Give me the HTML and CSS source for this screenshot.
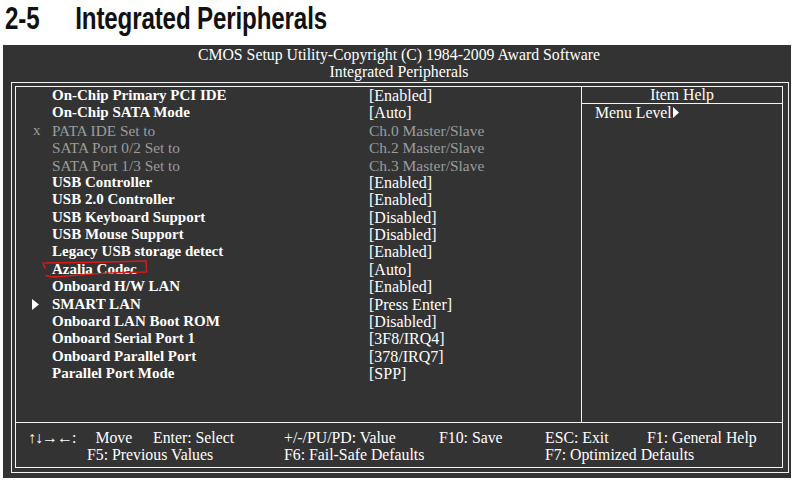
FILE: index.html
```html
<!DOCTYPE html>
<html>
<head>
<meta charset="utf-8">
<link rel="stylesheet" href="styles.css">
</head>
<body>
<div class="page">
  <h1 class="title"><span class="title-inner"><span class="num">2-5</span>Integrated Peripherals</span></h1>
  <div class="bios">
    <div class="hdr">CMOS Setup Utility-Copyright (C) 1984-2009 Award Software<br>Integrated Peripherals</div>
    <div class="frame">
      <div class="inner">
        <div class="main">
          <div class="list">
            <div class="row"><span class="mark"></span><span class="lbl">On-Chip Primary PCI IDE</span><span class="val">[Enabled]</span></div>
            <div class="row"><span class="mark"></span><span class="lbl">On-Chip SATA Mode</span><span class="val">[Auto]</span></div>
            <div class="row dim"><span class="mark">x</span><span class="lbl">PATA IDE Set to</span><span class="val">Ch.0 Master/Slave</span></div>
            <div class="row dim"><span class="mark"></span><span class="lbl">SATA Port 0/2 Set to</span><span class="val">Ch.2 Master/Slave</span></div>
            <div class="row dim"><span class="mark"></span><span class="lbl">SATA Port 1/3 Set to</span><span class="val">Ch.3 Master/Slave</span></div>
            <div class="row"><span class="mark"></span><span class="lbl">USB Controller</span><span class="val">[Enabled]</span></div>
            <div class="row"><span class="mark"></span><span class="lbl">USB 2.0 Controller</span><span class="val">[Enabled]</span></div>
            <div class="row"><span class="mark"></span><span class="lbl">USB Keyboard Support</span><span class="val">[Disabled]</span></div>
            <div class="row"><span class="mark"></span><span class="lbl">USB Mouse Support</span><span class="val">[Disabled]</span></div>
            <div class="row"><span class="mark"></span><span class="lbl">Legacy USB storage detect</span><span class="val">[Enabled]</span></div>
            <div class="row"><span class="mark"></span><span class="lbl">Azalia Codec</span><span class="val">[Auto]</span></div>
            <div class="row"><span class="mark"></span><span class="lbl">Onboard H/W LAN</span><span class="val">[Enabled]</span></div>
            <div class="row"><span class="mark"><svg class="tri" width="7" height="11" viewBox="0 0 7 11"><path d="M0 0 L7 5.5 L0 11 Z" fill="#fff"/></svg></span><span class="lbl">SMART LAN</span><span class="val">[Press Enter]</span></div>
            <div class="row"><span class="mark"></span><span class="lbl">Onboard LAN Boot ROM</span><span class="val">[Disabled]</span></div>
            <div class="row"><span class="mark"></span><span class="lbl">Onboard Serial Port 1</span><span class="val">[3F8/IRQ4]</span></div>
            <div class="row"><span class="mark"></span><span class="lbl">Onboard Parallel Port</span><span class="val">[378/IRQ7]</span></div>
            <div class="row"><span class="mark"></span><span class="lbl">Parallel Port Mode</span><span class="val">[SPP]</span></div>
          </div>
          <div class="help">
            <div class="help-title">Item Help</div>
            <div class="help-body">Menu Level<svg class="tri2" width="6" height="11" viewBox="0 0 6 11"><path d="M0 0 L6 5.5 L0 11 Z" fill="#fff"/></svg></div>
          </div>
        </div>
        <div class="footer">
          <span class="move"><span class="arrows">↑↓→←</span>:<span class="mv">Move</span></span>
          <span>Enter: Select</span>
          <span>+/-/PU/PD: Value</span>
          <span>F10: Save</span>
          <span>ESC: Exit</span>
          <span>F1: General Help</span>
          <span class="f5">F5: Previous Values</span>
          <span class="f6">F6: Fail-Safe Defaults</span>
          <span class="f7">F7: Optimized Defaults</span>
        </div>
      </div>
    </div>
  </div>
  <svg class="annot" width="793" height="480" viewBox="0 0 793 480">
    <path d="M43 263 L45 268 M45 263 Q95 262.5 146 261 L146.5 272 Q100 272.5 62 276.5 Q50 277.5 46 275.5" fill="none" stroke="#d61a1a" stroke-width="1.6" stroke-linecap="round"/>
  </svg>
</div>
</body>
</html>
```

FILE: styles.css
```css
html, body {
  margin: 0;
  padding: 0;
  background: #ffffff;
}

.page {
  position: relative;
  width: 793px;
  height: 480px;
  overflow: hidden;
}

.title {
  margin: 0;
  height: 45px;
  font-family: "Liberation Sans Narrow", "Liberation Sans", Arial, sans-serif;
  font-size: 32px;
  line-height: 36px;
  font-weight: 700;
  color: #111;
  white-space: nowrap;
}

.title-inner {
  display: inline-block;
  margin-left: 5px;
  transform: scaleX(0.755);
  transform-origin: 0 0;
  letter-spacing: -0.2px;
}

.num {
  display: inline-block;
  width: 93px;
}

.bios {
  margin-left: 3px;
  width: 788px;
  height: 433px;
  background: #333333;
  color: #ffffff;
  font-family: "Liberation Serif", "Times New Roman", serif;
  font-size: 15px;
  box-sizing: border-box;
  padding-top: 1px;
}

.hdr {
  text-align: center;
  line-height: 17px;
  padding-left: 4px;
  font-size: 15.8px;
}

.frame {
  margin-top: 2px;
  margin-left: 8px;
  width: 778px;
  box-sizing: border-box;
  border: 1px solid #f4f4f4;
  padding: 3px 5px 4px 3px;
}

.inner {
  border: 1px solid #f4f4f4;
  height: 382px;
  box-sizing: border-box;
  display: flex;
  flex-direction: column;
}

.main {
  display: flex;
  height: 336px;
  border-bottom: 1px solid #f4f4f4;
  box-sizing: border-box;
}

.list {
  width: 566px;
  box-sizing: border-box;
  border-right: 1px solid #f4f4f4;
  padding-top: 0;
}

.row {
  display: grid;
  grid-template-columns: 36px 317px 1fr;
  line-height: 17.375px;
  height: 17.375px;
  white-space: nowrap;
}

.mark {
  padding-left: 17px;
  display: flex;
  align-items: center;
}

.tri {
  margin-left: -1px;
}

.lbl {
  font-weight: 700;
}

.val {
  font-size: 16px;
}

.dim {
  color: #9c9c9c;
}

.dim .lbl {
  font-weight: 400;
  font-size: 15.3px;
}

.dim .val {
  font-size: 15.5px;
}

.help {
  flex: 1;
}

.help-title {
  text-align: center;
  line-height: 16px;
  border-bottom: 1px solid #f4f4f4;
  font-size: 15.8px;
}

.help-body {
  padding-left: 13px;
  line-height: 17px;
  font-size: 15.8px;
  display: flex;
  align-items: center;
}

.tri2 {
  margin-left: 1px;
}

.footer {
  display: grid;
  grid-template-columns: 123px 131px 155px 106px 102px 1fr;
  padding: 6px 0 0 14px;
  line-height: 17px;
  white-space: nowrap;
  font-size: 15.8px;
}

.move {
  margin-left: -2px;
}

.arrows {
  font-size: 16px;
  font-weight: 400;
  letter-spacing: -1px;
}

.mv {
  margin-left: 19px;
}

.f5 {
  grid-column: 1 / 3;
  padding-left: 57px;
}

.f6 {
  grid-column: 3 / 5;
}

.f7 {
  grid-column: 5 / 7;
}

.annot {
  position: absolute;
  left: 0;
  top: 0;
  pointer-events: none;
}
```
